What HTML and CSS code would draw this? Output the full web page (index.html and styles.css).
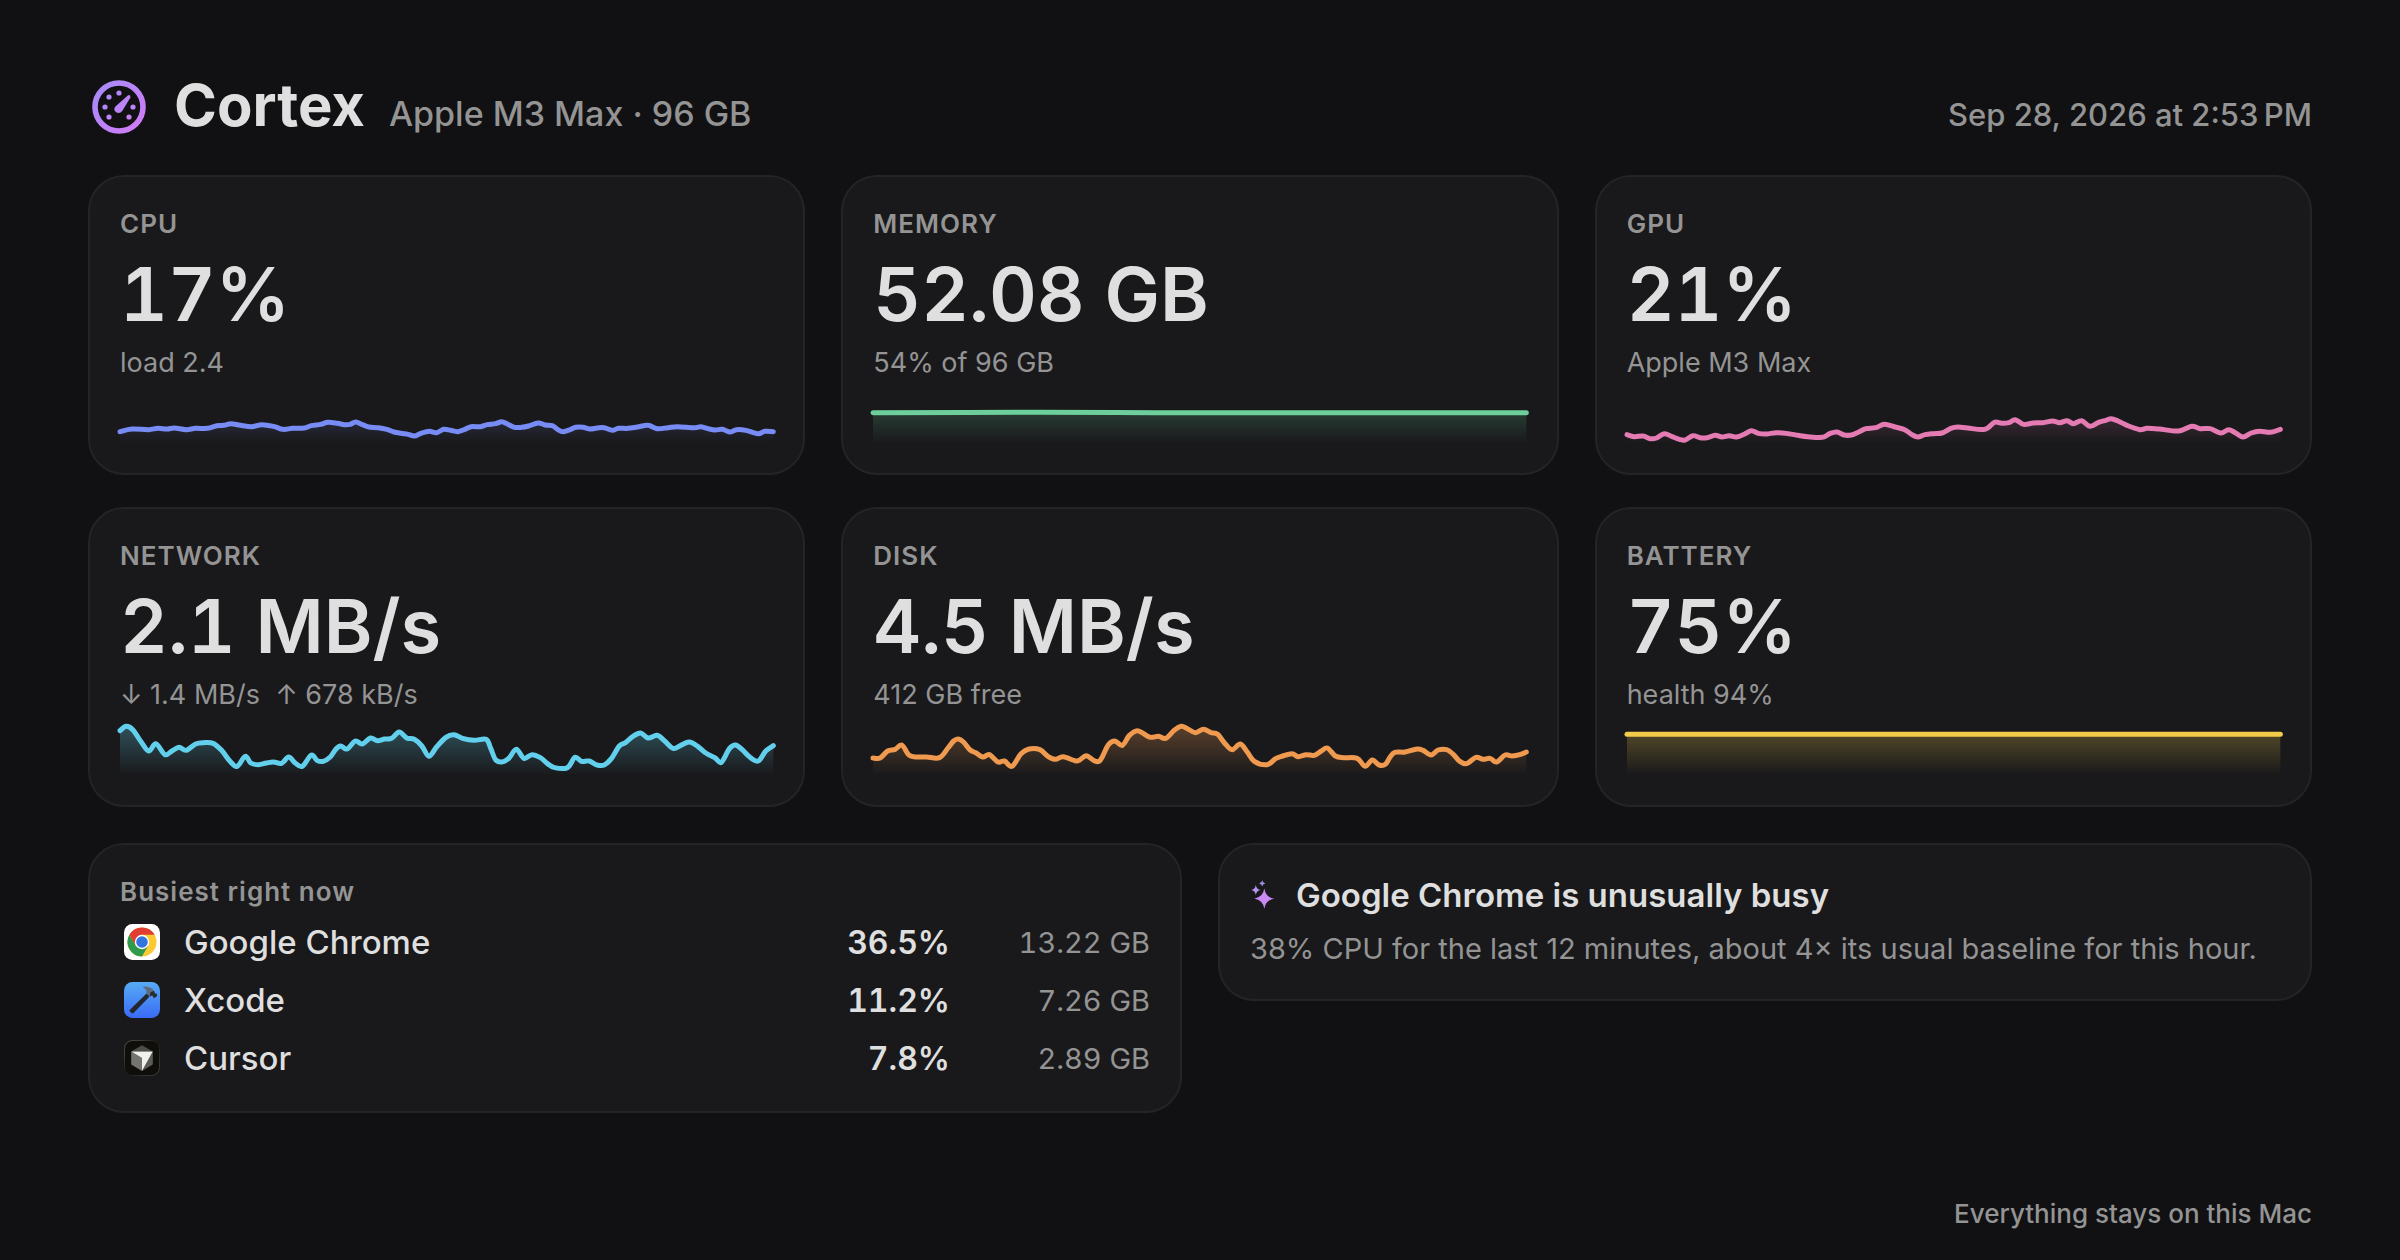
FILE: index.html
```html
<!DOCTYPE html>
<html lang="en">
<head>
  <meta charset="UTF-8">
  <title>Cortex</title>
  <meta name="viewport" content="width=device-width, initial-scale=1">
  <link rel="stylesheet" href="styles.css">
</head>
<body>
  <header class="header">
    <svg class="logo" viewBox="0 0 54 54" aria-hidden="true">
      <defs>
        <linearGradient id="brand" x1="0" y1="0" x2="54" y2="54" gradientUnits="userSpaceOnUse">
          <stop offset="0.1" stop-color="#a78bfa"/>
          <stop offset="0.9" stop-color="#d07bf5"/>
        </linearGradient>
      </defs>
      <circle cx="27" cy="27" r="24" fill="none" stroke="url(#brand)" stroke-width="5.6"/>
      <g fill="url(#brand)">
        <circle cx="27" cy="13" r="2.6"/>
        <circle cx="17" cy="17" r="2.6"/>
        <circle cx="13" cy="27" r="2.6"/>
        <circle cx="17" cy="37" r="2.6"/>
        <circle cx="37" cy="37" r="2.6"/>
        <circle cx="41" cy="27" r="2.6"/>
        <path d="M35.8 15.6Q38.4 14 38.4 17.4L30.4 30.8Q28 34 24.6 32.6Q20.8 30.4 23.2 26.8Z"/>
      </g>
    </svg>
    <h1>Cortex</h1>
    <p class="machine">Apple M3 Max · 96 GB</p>
    <time class="clock" datetime="2026-09-28T14:53">Sep 28, 2026 at 2:53&#8239;PM</time>
  </header>

  <main>
    <section class="metrics">
      <article class="card cpu">
        <h2>CPU</h2>
        <p class="value">17%</p>
        <p class="detail">load 2.4</p>
        <svg class="spark" data-series="cpu" preserveAspectRatio="none"></svg>
      </article>
      <article class="card memory">
        <h2>MEMORY</h2>
        <p class="value">52.08 GB</p>
        <p class="detail">54% of 96 GB</p>
        <svg class="spark" data-series="memory" preserveAspectRatio="none"></svg>
      </article>
      <article class="card gpu">
        <h2>GPU</h2>
        <p class="value">21%</p>
        <p class="detail">Apple M3 Max</p>
        <svg class="spark" data-series="gpu" preserveAspectRatio="none"></svg>
      </article>
      <article class="card network">
        <h2>NETWORK</h2>
        <p class="value">2.1 MB/s</p>
        <p class="detail">↓ 1.4 MB/s&nbsp; ↑ 678 kB/s</p>
        <svg class="spark" data-series="network" preserveAspectRatio="none"></svg>
      </article>
      <article class="card disk">
        <h2>DISK</h2>
        <p class="value">4.5 MB/s</p>
        <p class="detail">412 GB free</p>
        <svg class="spark" data-series="disk" preserveAspectRatio="none"></svg>
      </article>
      <article class="card battery">
        <h2>BATTERY</h2>
        <p class="value">75%</p>
        <p class="detail">health 94%</p>
        <svg class="spark" data-series="battery" preserveAspectRatio="none"></svg>
      </article>
    </section>

    <section class="panels">
      <article class="card busiest">
        <h2 id="busiest-title">Busiest right now</h2>
        <table aria-labelledby="busiest-title">
          <tbody>
            <tr>
              <td class="app-icon">
                <svg viewBox="0 0 36 36" aria-hidden="true">
                  <rect width="36" height="36" rx="8.5" fill="#fff"/>
                  <circle cx="18" cy="18" r="14.5" fill="#fbc934"/>
                  <path fill="#2f9a4b" d="M5.44 10.75L11.76 21.6L18 25.2L24.24 21.6L18 32.5A14.5 14.5 0 0 1 5.44 10.75Z"/>
                  <path fill="#df3e31" d="M5.44 10.75A14.5 14.5 0 0 1 30.56 10.75H18L11.76 21.6Z"/>
                  <circle cx="18" cy="18" r="7.2" fill="#fff"/>
                  <circle cx="18" cy="18" r="5.8" fill="#3474e0"/>
                </svg>
              </td>
              <th scope="row">Google Chrome</th>
              <td class="usage">36.5%</td>
              <td class="size">13.22 GB</td>
            </tr>
            <tr>
              <td class="app-icon">
                <svg viewBox="0 0 36 36" aria-hidden="true">
                  <defs>
                    <linearGradient id="xcode" x1="0" y1="0" x2="0" y2="1">
                      <stop offset="0" stop-color="#56acf5"/>
                      <stop offset="1" stop-color="#3a6af6"/>
                    </linearGradient>
                  </defs>
                  <rect width="36" height="36" rx="8.5" fill="url(#xcode)"/>
                  <path fill="#22272e" d="M5.2 28.4L15.4 18.6L22.6 11.4L25.6 14.4L18.8 21.6L9 31.6Q7.4 31.6 5.2 28.4Z"/>
                  <path fill="#5d6b7a" d="M18.6 4.8Q24.6 3.4 29 7.6L30.2 10.4L26 14.6L22.4 11.6Q23.6 8 18.6 4.8Z"/>
                  <path fill="#272c33" d="M26.4 10.6L30 8.8L31 11.4L33 11.8V14.2L29.8 16.2L28.4 13.6L25.8 14.2Z"/>
                </svg>
              </td>
              <th scope="row">Xcode</th>
              <td class="usage">11.2%</td>
              <td class="size">7.26 GB</td>
            </tr>
            <tr>
              <td class="app-icon">
                <svg viewBox="0 0 36 36" aria-hidden="true">
                  <defs>
                    <linearGradient id="edge" x1="0" y1="0" x2="1" y2="1">
                      <stop offset="0" stop-color="#55544f"/>
                      <stop offset="0.5" stop-color="#1c1b17"/>
                      <stop offset="1" stop-color="#45443f"/>
                    </linearGradient>
                  </defs>
                  <rect x="0.5" y="0.5" width="35" height="35" rx="8" fill="#0f0e0a" stroke="url(#edge)"/>
                  <path fill="#4c4c49" d="M18 5.2L28.8 11.6H7.2Z"/>
                  <path fill="#73736f" d="M7.2 11.6L18 18V31L7.2 24.6Z"/>
                  <path fill="#5b5b57" d="M28.8 11.6V24.6L18 31Z"/>
                  <path fill="#f0f0ec" d="M7.2 11.6H28.8L18 31V18Z"/>
                </svg>
              </td>
              <th scope="row">Cursor</th>
              <td class="usage">7.8%</td>
              <td class="size">2.89 GB</td>
            </tr>
          </tbody>
        </table>
      </article>

      <article class="card insight">
        <h2>
          <svg class="sparkles" viewBox="0 0 26 32" aria-hidden="true">
            <path fill="#c98af6" d="M14.3 9.6Q15.6 18.4 24.3 19.7Q15.6 21 14.3 29.8Q13 21 4.3 19.7Q13 18.4 14.3 9.6Z"/>
            <path fill="#b493f3" d="M5.8 6Q6.5 10.3 10.6 11Q6.5 11.7 5.8 16Q5.1 11.7 1 11Q5.1 10.3 5.8 6Z"/>
            <path fill="#9d8ce0" d="M12.2 1.2Q12.7 3.9 15.3 4.4Q12.7 4.9 12.2 7.6Q11.7 4.9 9.1 4.4Q11.7 3.9 12.2 1.2Z"/>
          </svg>
          Google Chrome is unusually busy
        </h2>
        <p>38% CPU for the last 12 minutes, about 4× its usual baseline for this hour.</p>
      </article>
    </section>
  </main>

  <footer class="footer">Everything stays on this Mac</footer>

  <script src="script.js"></script>
</body>
</html>
```

FILE: styles.css
```css
* {
  box-sizing: border-box;
}
body {
  display: flex;
  flex-direction: column;
  min-height: 100vh;
  margin: 0;
  padding: 69px 88px 28px;
  background-color: #111113;
  color: #dfdfdf;
  font-family: Inter, "Liberation Sans", sans-serif;
}
h1, h2, p {
  margin: 0;
}

/* Header */
.header {
  display: flex;
  align-items: baseline;
  margin-bottom: 34px;
}
.logo {
  align-self: center;
  width: 54px;
  height: 54px;
  margin: 4px 28px 0 4px;
}
h1 {
  font-size: 58px;
  line-height: 72px;
  font-weight: 700;
}
.machine {
  margin-left: 24px;
  color: #949494;
  font-size: 34px;
  font-weight: 500;
}
.clock {
  margin-left: auto;
  color: #949494;
  font-size: 31px;
  font-weight: 500;
}

/* Cards */
.card {
  padding: 30px;
  background-color: #19191b;
  border: 2px solid #242426;
  border-radius: 36px;
}
.card h2 {
  color: #949494;
  font-size: 26px;
  line-height: 34px;
  font-weight: 600;
  letter-spacing: 1px;
}
.metrics {
  display: grid;
  grid-template-columns: repeat(3, 1fr);
  gap: 32px 36px;
}
.value {
  margin-top: 8px;
  font-size: 74px;
  line-height: 90px;
  font-weight: 600;
  font-variant-numeric: tabular-nums;
}
.detail {
  margin-top: 6px;
  color: #949494;
  font-size: 27px;
  line-height: 36px;
}

/* Sparklines */
.spark {
  display: block;
  width: 100%;
  height: 56px;
  margin-top: 6px;
  overflow: visible;
}
.spark .line {
  fill: none;
  stroke: currentColor;
  stroke-width: 5px;
  stroke-linecap: round;
  stroke-linejoin: round;
  vector-effect: non-scaling-stroke;
}
.cpu .spark {
  color: #788cf5;
}
.memory .spark {
  color: #6dd09c;
}
.gpu .spark {
  color: #e57bb3;
}
.network .spark {
  color: #62d0ec;
}
.disk .spark {
  color: #f09a50;
}
.battery .spark {
  color: #f3cd4a;
}

/* Bottom row */
.panels {
  display: grid;
  grid-template-columns: 1fr 1fr;
  align-items: start;
  gap: 36px;
  margin-top: 36px;
}
.busiest {
  padding-bottom: 24px;
}
.busiest table {
  width: 100%;
  margin-top: 4px;
  border-collapse: collapse;
}
.busiest td, .busiest th {
  height: 58px;
  padding: 0;
}
.busiest .app-icon {
  width: 64px;
  padding-left: 4px;
}
.app-icon svg {
  display: block;
  width: 36px;
  height: 36px;
}
.busiest th {
  font-size: 33px;
  font-weight: 500;
  text-align: left;
}
.usage, .size {
  text-align: right;
  font-variant-numeric: tabular-nums;
}
.usage {
  font-size: 32px;
  font-weight: 600;
}
.size {
  width: 200px;
  color: #949494;
  font-size: 29px;
}
.card.insight h2 {
  display: flex;
  align-items: center;
  gap: 20px;
  color: #dfdfdf;
  font-size: 33px;
  line-height: 40px;
  letter-spacing: 0;
}
.sparkles {
  width: 26px;
  height: 32px;
}
.insight p {
  margin-top: 14px;
  color: #949494;
  font-size: 29px;
  line-height: 40px;
}

.footer {
  margin-top: auto;
  color: #949494;
  font-size: 26px;
  line-height: 36px;
  font-weight: 500;
  text-align: right;
}

@media (max-width: 1500px) {
  .metrics, .panels {
    grid-template-columns: 1fr;
  }
  .header {
    flex-wrap: wrap;
  }
}
```

FILE: script.js
```js
// x runs left to right, y runs downwards; both are stretched to the chart box
const HEIGHT = 168;

const series = {
  cpu: [[0,134],[25,126],[60,128],[80,124],[100,126],[115,123],[140,128],[160,124],[185,124],[205,116],[220,115],[235,110],[255,115],[280,119],[300,113],[325,118],[345,127],[365,124],[390,123],[405,116],[425,112],[440,106],[460,109],[475,113],[487,112],[499,105],[513,113],[527,120],[547,122],[565,127],[580,135],[595,139],[610,142],[623,147],[637,139],[655,133],[670,137],[685,127],[700,130],[715,134],[730,127],[743,119],[763,119],[777,113],[795,110],[808,104],[820,111],[835,121],[850,121],[865,117],[885,108],[900,114],[915,116],[927,128],[938,134],[953,128],[965,121],[980,121],[995,126],[1010,123],[1025,122],[1042,130],[1055,124],[1075,124],[1095,120],[1118,115],[1137,125],[1160,122],[1180,119],[1215,122],[1230,119],[1245,125],[1260,129],[1275,127],[1292,135],[1305,128],[1325,130],[1350,140],[1365,133],[1383,134]],
  memory: [[0,77],[345,76],[600,77],[860,77],[1050,77],[1386,77]],
  gpu: [[0,143],[15,149],[33,147],[48,155],[61,153],[77,140],[93,149],[108,157],[120,159],[136,146],[151,152],[165,152],[182,145],[196,150],[211,146],[226,150],[243,141],[257,131],[271,139],[288,141],[308,137],[333,140],[353,145],[373,149],[403,151],[418,140],[433,135],[448,144],[463,144],[478,135],[493,125],[513,122],[531,112],[553,120],[573,128],[588,143],[600,150],[615,143],[633,140],[650,138],[668,124],[683,120],[703,123],[738,127],[758,106],[773,109],[788,107],[801,98],[818,112],[838,108],[858,107],[878,102],[893,107],[908,101],[921,110],[938,101],[955,118],[973,106],[988,100],[999,95],[1013,102],[1033,116],[1058,128],[1073,124],[1098,126],[1138,132],[1165,118],[1183,125],[1203,125],[1225,138],[1241,128],[1255,137],[1271,150],[1288,138],[1305,133],[1328,136],[1348,127]],
  network: [[0,35],[13,22],[27,32],[45,69],[61,96],[76,74],[95,107],[110,96],[125,85],[140,94],[160,75],[177,71],[197,73],[215,94],[233,127],[248,142],[265,112],[277,132],[293,137],[310,132],[325,129],[342,133],[357,114],[371,132],[386,142],[405,108],[417,124],[430,127],[445,114],[456,92],[467,81],[481,90],[498,66],[513,75],[530,57],[545,65],[560,60],[575,58],[591,39],[607,57],[623,61],[639,81],[654,112],[670,84],[690,55],[707,47],[725,58],[750,64],[775,61],[785,89],[795,122],[808,129],[823,118],[839,91],[855,118],[872,107],[890,116],[905,134],[920,146],[947,146],[963,115],[977,127],[993,126],[1010,138],[1025,138],[1040,119],[1057,81],[1070,71],[1085,53],[1102,42],[1118,57],[1137,49],[1153,66],[1171,88],[1187,79],[1205,69],[1223,82],[1240,102],[1260,117],[1273,130],[1290,89],[1303,78],[1317,92],[1333,114],[1351,126],[1367,96],[1383,80]],
  disk: [[0,117],[15,117],[31,96],[47,91],[61,78],[77,109],[94,114],[114,114],[141,116],[159,87],[171,66],[181,60],[192,69],[206,93],[219,102],[233,114],[247,107],[265,129],[279,126],[295,142],[314,104],[331,90],[354,92],[371,112],[387,121],[404,113],[433,126],[452,110],[469,125],[482,124],[499,78],[513,66],[529,79],[544,49],[561,35],[576,46],[589,55],[606,52],[621,58],[639,34],[654,22],[667,29],[684,41],[701,31],[717,41],[731,46],[747,74],[762,92],[779,75],[794,99],[809,127],[836,137],[854,119],[869,111],[889,104],[902,113],[919,107],[936,109],[951,96],[964,87],[981,111],[999,116],[1027,118],[1044,142],[1059,123],[1074,138],[1087,136],[1097,114],[1107,100],[1129,99],[1154,90],[1167,94],[1184,108],[1199,93],[1217,92],[1231,106],[1244,126],[1259,134],[1279,115],[1294,121],[1309,118],[1323,129],[1341,108],[1356,111],[1374,106],[1386,99]],
  battery: [[0,46],[1386,46]]
};

// Smooth curve through all points
function curve(points) {
  let d = `M${points[0][0]} ${points[0][1]}`;
  for (let i = 0; i < points.length - 1; i++) {
    const p0 = points[i - 1] || points[i];
    const p1 = points[i];
    const p2 = points[i + 1];
    const p3 = points[i + 2] || p2;
    d += `C${p1[0] + (p2[0] - p0[0]) / 6} ${p1[1] + (p2[1] - p0[1]) / 6}`;
    d += ` ${p2[0] - (p3[0] - p1[0]) / 6} ${p2[1] - (p3[1] - p1[1]) / 6}`;
    d += ` ${p2[0]} ${p2[1]}`;
  }
  return d;
}

document.querySelectorAll('.spark').forEach((svg) => {
  const name = svg.dataset.series;
  const points = series[name];
  const width = points[points.length - 1][0];
  const line = curve(points);
  svg.setAttribute('viewBox', `0 0 ${width} ${HEIGHT}`);
  svg.innerHTML = `
    <defs>
      <linearGradient id="fade-${name}" x1="0" y1="0" x2="0" y2="${HEIGHT}" gradientUnits="userSpaceOnUse">
        <stop offset="0" stop-color="currentColor" stop-opacity="0.35"/>
        <stop offset="1" stop-color="currentColor" stop-opacity="0"/>
      </linearGradient>
    </defs>
    <path fill="url(#fade-${name})" d="${line}V${HEIGHT}H0Z"/>
    <path class="line" d="${line}"/>`;
});
```
